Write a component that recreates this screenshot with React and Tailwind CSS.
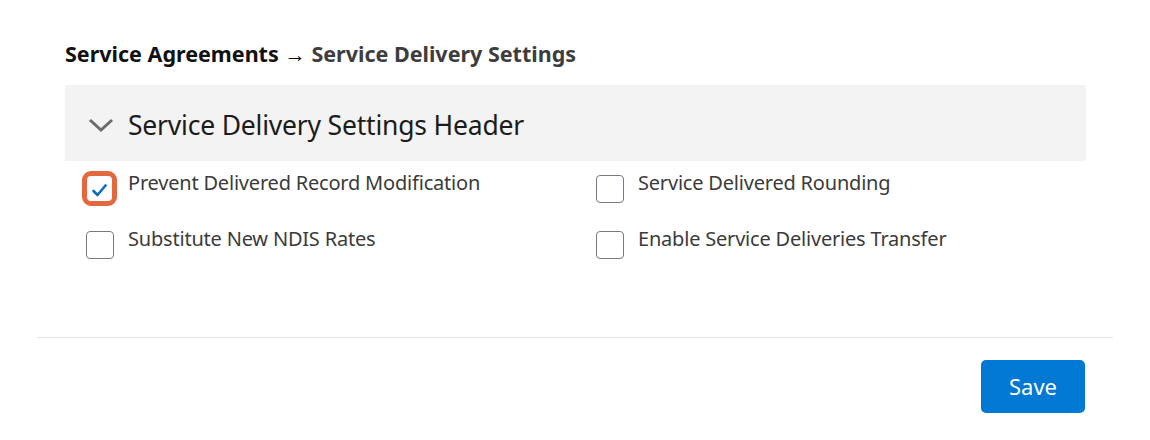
// App.jsx
import React, { useState } from 'react';

// ! Settings rows, two columns
const SETTINGS = [
  { id: 'prevent', label: 'Prevent Delivered Record Modification', checked: true, focused: true },
  { id: 'rounding', label: 'Service Delivered Rounding', checked: false },
  { id: 'ndis', label: 'Substitute New NDIS Rates', checked: false },
  { id: 'transfer', label: 'Enable Service Deliveries Transfer', checked: false },
];

const Checkbox = ({ checked, focused, onChange }) => (
  <button
    type="button"
    onClick={onChange}
    className={
      focused
        ? 'w-[35px] h-[35px] -ml-[4px] -mt-[4px] rounded-[9px] border-[5px] border-[#e4683f] bg-white flex items-center justify-center shrink-0'
        : 'w-[28px] h-[28px] rounded-[4px] border border-[#7a7a7a] bg-white flex items-center justify-center shrink-0'
    }
  >
    {checked && (
      <svg width="15" height="13" viewBox="0 0 15 13" fill="none" className="mt-[3px]">
        <path d="M1.5 7 L5.5 11 L13.5 1.5" stroke="#0f6cbd" strokeWidth="2.6" strokeLinecap="round" strokeLinejoin="round" />
      </svg>
    )}
  </button>
);

export default function App() {
  const [values, setValues] = useState(
    Object.fromEntries(SETTINGS.map((s) => [s.id, s.checked]))
  );

  return (
    <div className="w-[1150px] h-[440px] bg-white font-['Noto_Sans','Open_Sans',sans-serif]">
      <div className="pt-[39px] px-[65px] pr-[64px]">
        {/* --- Breadcrumb --- */}
        <h1 className="h-[30px] text-[21.5px] font-bold leading-[30px] text-[#111]">
          Service Agreements <span className="font-normal">→</span>{' '}
          <span className="text-[#3d3d3d]">Service Delivery Settings</span>
        </h1>

        {/* --- Section header --- */}
        <div className="mt-[16px] h-[76px] bg-[#f3f3f3] flex items-center pl-[23px]">
          <svg width="26" height="16" viewBox="0 0 26 16" fill="none" className="mt-[4px]">
            <path d="M2 3 L13 13 L24 3" stroke="#6b6b6b" strokeWidth="3" />
          </svg>
          <span className="ml-[14px] pt-[5px] text-[26.5px] text-[#1b1b1b] tracking-[-0.2px]">
            Service Delivery Settings Header
          </span>
        </div>

        {/* --- Settings grid --- */}
        <div className="grid grid-cols-[510px_1fr] gap-y-[25px] pl-[21px] pt-[14px]">
          {SETTINGS.map((s) => (
            <label key={s.id} className="flex items-start gap-[14px] cursor-pointer">
              <div className="w-[28px] flex">
                <Checkbox
                  checked={values[s.id]}
                  focused={s.focused}
                  onChange={() => setValues({ ...values, [s.id]: !values[s.id] })}
                />
              </div>
              <span className="text-[20px] leading-[22px] text-[#3b3b3b] -mt-[3px] tracking-[-0.2px]">
                {s.label}
              </span>
            </label>
          ))}
        </div>
      </div>

      {/* --- Footer --- */}
      <div className="mt-[78px] mx-[37px] border-t border-[#e6e6e6]" />
      <div className="flex justify-end pr-[65px] pt-[22px]">
        <button
          type="button"
          className="w-[104px] h-[53px] rounded-[5px] bg-[#0078d4] text-white text-[22px] hover:bg-[#106ebe]"
        >
          Save
        </button>
      </div>
    </div>
  );
}
